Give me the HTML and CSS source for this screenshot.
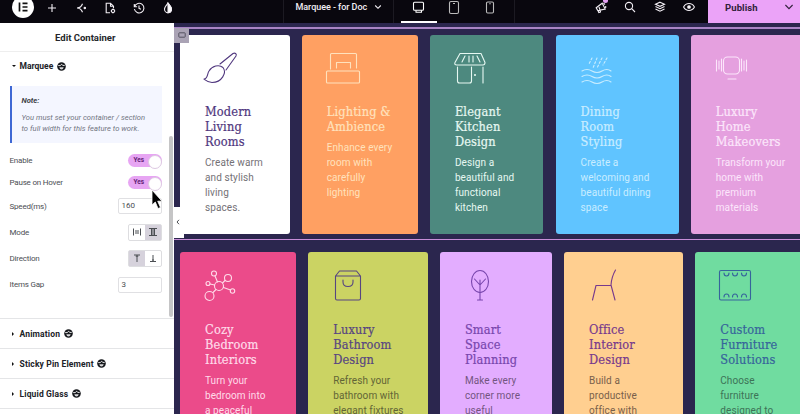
FILE: index.html
```html
<!DOCTYPE html>
<html lang="en">
<head>
<meta charset="utf-8">
<title>Marquee - for Doc</title>
<link rel="stylesheet" href="styles.css">
</head>
<body>
<svg class="defs" width="0" height="0" aria-hidden="true">
  <symbol id="badge" viewBox="0 0 9 9"><circle cx="4.500" cy="4.500" r="4.300" fill="#16181c"/><path d="M1.200 3.600h2L4.700 2.200l1 1.200h2" fill="none" stroke="#fff" stroke-width=".9"/><path d="M2.300 5.200h4.400Q6.200 7.400 4.500 7.400T2.300 5.200z" fill="#d8d8da"/></symbol>
</svg>
<div class="app">
  <header class="topbar">
    <div class="tools">
      <span class="logo"><svg width="22" height="22" viewBox="0 0 22 22"><circle cx="11" cy="11" r="11" fill="#fff"/><path d="M7.500 6.500v9M10.500 7.300h5M10.500 11h5M10.500 14.700h5" stroke="#111" stroke-width="1.700"/></svg></span>
      <svg width="12" height="12" viewBox="0 0 12 12"><path d="M6 2v8M2 6h8"/></svg>
      <svg width="12" height="12" viewBox="0 0 12 12"><path d="M7.500 1.800C6.500 4.500 4.500 6 2 6c2.500 0 4.500 1.500 5.500 4.200"/><circle cx="9.800" cy="6" r=".7" fill="#fff"/></svg>
      <svg width="12" height="12" viewBox="0 0 12 12"><path d="M6 10.800H2.200V1.200h4.300l3 3v2M6.500 1.200v3h3"/><circle cx="9" cy="9" r="1.600"/><path d="M9 6.800v.6M9 10.600v.6M6.800 9h.6M10.600 9h.6"/></svg>
      <svg width="12" height="12" viewBox="0 0 12 12"><path d="M1.600 4.500a4.800 4.800 0 1 1-.2 2.500M1.300 2v2.800h2.800M6 3.600v2.700l1.900.9"/></svg>
      <svg width="12" height="12" viewBox="0 0 12 12"><path d="M6 1.200C4 3.500 2.500 5 2.500 7a3.500 3.800 0 0 0 7 0C9.500 5 8 3.500 6 1.200z"/><path d="M6 1.200V10.800a3.700 3.800 0 0 0 3.500-3.800C9.500 5 8 3.500 6 1.200z" fill="#fff"/></svg>
    </div>
    <div class="doc">Marquee - for Doc <svg width="8" height="6" viewBox="0 0 8 6"><path d="M1.200 1.500 4 4.300l2.800-2.800"/></svg></div>
    <div class="devices">
      <span class="device on"><svg width="14" height="14" viewBox="0 0 14 14"><rect x="1.500" y="2.200" width="10" height="8" rx="1"/><path d="M3.500 12.300h6.500M4 10.200v2M9.500 10.200v2"/></svg></span>
      <span class="device"><svg width="14" height="14" viewBox="0 0 14 14"><rect x="2.500" y="1.500" width="9" height="12" rx="1.500"/><path d="M6 3.500h2"/></svg></span>
      <span class="device"><svg width="14" height="14" viewBox="0 0 14 14"><rect x="3.500" y="2" width="7" height="11" rx="1.200"/><path d="M6.200 3.700h1.600"/></svg></span>
    </div>
    <div class="actions">
      <span class="notice"><svg width="12" height="12" viewBox="0 0 12 12"><path d="m1.200 6.800 6-4.600 3 5.800-7.400 1.600zM4 6l1.600 5M3 9.500l.8 2 2-.5M8.500 2.200 10 3.500M10.700 5v2"/></svg></span>
      <svg width="12" height="12" viewBox="0 0 12 12"><circle cx="5" cy="5" r="3.600"/><path d="m7.700 7.700 3.300 3.300"/></svg>
      <svg width="12" height="12" viewBox="0 0 12 12"><path d="m6 1.200 4.500 2L6 5.300 1.500 3.200zM1.500 5.500 6 7.700l4.500-2.200M1.500 8 6 10.200 10.500 8"/></svg>
      <svg width="12" height="12" viewBox="0 0 12 12"><path d="M.6 6C3 1.400 9 1.400 11.400 6 9 10.600 3 10.600.6 6z"/><circle cx="6" cy="6" r="1.300" fill="#fff"/></svg>
    </div>
    <div class="publish"><b>Publish</b><svg width="10" height="8" viewBox="0 0 10 8"><path d="m1.400 2 3.600 3.600L8.600 2"/></svg></div>
  </header>
  <div class="body">
    <aside class="panel">
      <h1>Edit Container</h1>
      <div class="section-head open"><i class="caret"></i>Marquee <svg width="9" height="9"><use href="#badge"/></svg></div>
      <div class="note"><b>Note:</b><p>You must set your container / section<br>to full width for this feature to work.</p></div>
      <div class="row switch-row"><span>Enable</span><span class="switch">Yes</span></div>
      <div class="row switch-row"><span>Pause on Hover</span><span class="switch">Yes</span></div>
      <div class="row"><span>Speed(ms)</span><span class="field">160</span></div>
      <div class="row"><span>Mode</span><span class="choice"><i><svg width="10" height="10" viewBox="0 0 10 10"><path d="M1.500 1.500v7M8.500 1.500v7M3 4h4M3 6h4"/></svg></i><i class="sel"><svg width="10" height="10" viewBox="0 0 10 10"><path d="M1 1.500h8M1 8.500h8M3.500 2v6M6.500 2v6M5 2v6"/></svg></i></span></div>
      <div class="row"><span>Direction</span><span class="choice"><i class="sel"><svg width="10" height="10" viewBox="0 0 10 10"><path d="M2 2h6M5 2v7M3.700 3.200h2.600"/></svg></i><i><svg width="10" height="10" viewBox="0 0 10 10"><path d="M2 8.500h6M5 2v6M4 7h2"/></svg></i></span></div>
      <div class="row"><span>Items Gap</span><span class="field">3</span></div>
      <div class="sections">
        <div class="section-head"><i class="caret"></i>Animation <svg width="9" height="9"><use href="#badge"/></svg></div>
        <div class="section-head"><i class="caret"></i>Sticky Pin Element <svg width="9" height="9"><use href="#badge"/></svg></div>
        <div class="section-head"><i class="caret"></i>Liquid Glass <svg width="9" height="9"><use href="#badge"/></svg></div>
      </div>
      <span class="scrollbar"></span>
      <span class="collapse"><svg width="4" height="6" viewBox="0 0 4 6"><path d="M3 .8 1 3l2 2.200"/></svg></span>
      <svg class="cursor" width="12" height="21" viewBox="0 0 12 21"><path d="M1 1v15l3.300-3 2.700 6.500 2.500-1-2.800-6.300H11z" fill="#000" stroke="#fff" stroke-width=".8"/></svg>
    </aside>
    <main class="canvas">
      <div class="track first">
        <article class="card white">
          <svg class="icon" viewBox="0 0 34 32"><path d="m15 11 13-10.500c2-1 4 0 3 2.500L21 17M18 14.500c4 5-1 15-11 15-4 0-6-2-8-3.500 4-.5 3-5 5-8 3-5 10-7 14-3.500z"/></svg>
          <h2>Modern<br>Living<br>Rooms</h2><p>Create warm<br>and stylish<br>living<br>spaces.</p></article>
        <article class="card orange">
          <svg class="icon" viewBox="0 0 34 32"><path d="M3.500 16V1.500q0-1 1-1h24q1 0 1 1V15M9.500 15V9.500h14V15"/><rect x="-.5" y="18" width="33" height="12" rx="1"/></svg>
          <h2>Lighting &amp;<br>Ambience</h2><p>Enhance every<br>room with<br>carefully<br>lighting</p></article>
        <article class="card teal">
          <svg class="icon" viewBox="0 0 34 32"><path d="M5 .5h21l4 9q0 2.500-2 2.500H2q-3 0-2-2.500zM10 3 7 9M14 3v6M18 3v6M22 3l3 6M2.500 14v14q0 2 2 2h10q2 0 2-2V14M28 14v16"/><circle cx="20" cy="22" r=".5"/></svg>
          <h2>Elegant<br>Kitchen<br>Design</h2><p>Design a<br>beautiful and<br>functional<br>kitchen</p></article>
        <article class="card blue">
          <svg class="icon" viewBox="0 0 34 32"><path d="M1 18q5-3 10 0t10 0 9 0M1 23.500q5-3 10 0t10 0 9 0M1 29q5-3 10 0t10 0 9 0"/><path stroke-dasharray="2 2" d="m11 5-3 6M16 5l-4 10M21 5l-5 10M26 5l-4 7"/></svg>
          <h2>Dining<br>Room<br>Styling</h2><p>Create a<br>welcoming and<br>beautiful dining<br>space</p></article>
        <article class="card pink">
          <svg class="icon" viewBox="0 0 34 32"><rect x="7.500" y="4" width="16" height="17" rx="4"/><path d="M5.500 6v12M3 8v8M.5 7v11M25.500 6v12M28 8v9M30.500 7v11M12 26h8"/></svg>
          <h2>Luxury<br>Home<br>Makeovers</h2><p>Transform your<br>home with<br>premium<br>materials</p></article>
      </div>
      <div class="track second">
        <article class="card rose">
          <svg class="icon" viewBox="0 0 34 32"><circle cx="14" cy="16" r="4.500"/><circle cx="4.500" cy="26" r="4.500"/><circle cx="9" cy="3.500" r="2.500"/><circle cx="23" cy="8" r="3.500"/><circle cx="3" cy="13.500" r="2"/><circle cx="27.500" cy="21" r="2.200"/><path d="m10 6 2.500 6M20 10.500 17.500 13M5 14l4.500 1M18.500 17.500l7 2.500M11 19.500 8 22.500"/></svg>
          <h2>Cozy<br>Bedroom<br>Interiors</h2><p>Turn your<br>bedroom into<br>a peaceful</p></article>
        <article class="card lime">
          <svg class="icon" viewBox="0 0 34 32"><path d="M2.500 6v22.500q0 1.500 1.500 1.500h22q1.500 0 1.500-1.500V6zM2.500 6l4-5h17l4 5M10 10v2q0 4.500 5 4.500t5-4.500v-2"/></svg>
          <h2>Luxury<br>Bathroom<br>Design</h2><p>Refresh your<br>bathroom with<br>elegant fixtures</p></article>
        <article class="card lilac">
          <svg class="icon" viewBox="0 0 34 32"><ellipse cx="15" cy="11.500" rx="8.500" ry="11"/><path d="M15 10v20M12.500 30h5M9.500 9l5.500 6L20.500 9"/></svg>
          <h2>Smart<br>Space<br>Planning</h2><p>Make every<br>corner more<br>useful</p></article>
        <article class="card peach">
          <svg class="icon" viewBox="0 0 34 32"><path d="M26.500 0q-4 7-4.500 15l4 15M22 15.500H7L3.500 30"/></svg>
          <h2>Office<br>Interior<br>Design</h2><p>Build a<br>productive<br>office with</p></article>
        <article class="card green">
          <svg class="icon" viewBox="0 0 34 32"><rect x="-.5" y=".5" width="31" height="29.500" rx="1.500"/><path d="M4 3q0 3 2.500 3T9 3M12.500 3q0 3 2.500 3t2.500-3M21.500 3q0 3 2.500 3t2.500-3M4 27q0-3 2.500-3T9 27M12.500 27q0-3 2.500-3t2.500 3M21.500 27q0-3 2.500-3t2.500 3"/></svg>
          <h2>Custom<br>Furniture<br>Solutions</h2><p>Choose<br>furniture<br>designed to</p></article>
      </div>
      <span class="handle"><svg width="8" height="6" viewBox="0 0 8 6"><rect x=".8" y=".8" width="6.400" height="4.400" rx=".6"/></svg></span>
    </main>
  </div>
</div>
</body>
</html>
```
FILE: styles.css
```css
* { box-sizing: border-box; }
body { margin: 0; font-family: Roboto, "Liberation Sans", sans-serif; }
h1, h2, p { margin: 0; }
svg { display: block; fill: none; stroke: currentColor; flex: none; overflow: visible; }
.defs { position: absolute; }
.app { width: 800px; height: 414px; overflow: hidden; display: flex; flex-direction: column; }

.topbar { height: 22.5px; flex: none; background: #09070e; color: #f2eef4; display: flex; align-items: stretch; position: relative; z-index: 2; }
.topbar svg { stroke-width: 1.1; }
.tools { width: 284px; display: flex; align-items: center; gap: 17px; padding: 0 0 7px 12px; border-right: 1px solid #1c1a22; }
.logo { width: 22px; height: 22px; margin: -2px 0 0; }
.logo svg { stroke: none; }
.logo + svg { margin-left: -5px; }
.doc { width: 110px; display: flex; align-items: center; gap: 7px; padding: 0 0 8px 11.500px; font-size: 9px; font-weight: 500; letter-spacing: -.05px; white-space: nowrap; border-right: 1px solid #1c1a22; }
.devices { width: 121px; display: flex; padding-left: 7px; border-right: 1px solid #1c1a22; }
.device { width: 35.5px; display: flex; justify-content: center; color: #bbb; }
.device.on { border-bottom: 2px solid #fff; color: #fff; }
.actions { width: 193px; display: flex; align-items: center; justify-content: flex-end; gap: 17.500px; padding: 0 13px 8px 0; }
.notice { position: relative; }
.notice::after { content: ""; position: absolute; width: 5px; height: 5px; border-radius: 50%; background: #e6a3f5; top: -3px; left: 8px; }
.publish { width: 92px; background: #eba3f8; color: #30203b; display: flex; align-items: center; justify-content: space-between; padding: 0 6px 8px 17px; font-size: 9.5px; letter-spacing: .1px; }

.body { flex: 1; display: flex; min-height: 0; }
.panel { width: 173.5px; flex: none; background: #fff; position: relative; z-index: 1; display: flex; flex-direction: column; color: #4b4e53; font-size: 8px; }
h1 { height: 29.500px; line-height: 29px; text-align: center; padding-right: 3px; font-size: 9.500px; font-weight: 700; color: #25272b; border-bottom: 1px solid #eee; }
.section-head { display: flex; align-items: center; gap: 4px; height: 30.200px; padding-left: 11.500px; color: #202227; font-size: 8.500px; letter-spacing: .15px; font-weight: 700; }
.section-head svg { stroke: none; margin-left: -.5px; }
.section-head.open { height: 28px; letter-spacing: 0; }
.caret { width: 4px; border: 2px solid transparent; border-left: 2.500px solid #111; border-right: 0; }
.open .caret { border: 2px solid transparent; border-top: 2.500px solid #111; border-bottom: 0; }
.note { width: 152px; height: 57px; margin: 6px 0 7.500px 9.500px; padding: 10px 0 0 10px; background: #f4f6ff; border-left: 2px solid #3e68d4; font-style: italic; font-size: 7.600px; line-height: 11px; color: #71757f; white-space: nowrap; }
.note b { display: block; margin-bottom: 6px; color: #3c3f45; line-height: 10px; }
.note p { letter-spacing: .03px; }
.row { height: 26.200px; display: flex; justify-content: space-between; align-items: center; padding: 0 12px 0 9.500px; letter-spacing: -.2px; }
.switch-row { height: 22px; margin-top: -1px; margin-bottom: 1px; }
.switch-row + .row:not(.switch-row) { margin-top: -1.500px; }
.switch { width: 34px; height: 13px; border-radius: 7px; background: #e7a5f3; position: relative; padding-left: 6px; line-height: 13px; font-size: 6.500px; font-weight: 700; letter-spacing: 0; color: #632276; }
.switch::after { content: ""; position: absolute; right: 0; top: .5px; width: 12px; height: 12px; border-radius: 50%; background: #fff; border: .5px solid #ddc8e2; }
.field { width: 44px; height: 16px; border: 1px solid #e0e0e3; border-radius: 2px; line-height: 14px; padding-left: 3px; letter-spacing: 0; }
.choice { width: 34px; height: 16.500px; display: flex; border: 1px solid #dddde0; border-radius: 2px; }
.choice i { flex: 1; display: flex; align-items: center; justify-content: center; }
.choice .sel { background: #d6d2dc; }
.sections { margin-top: 20.300px; }
.sections .section-head { border-top: 1px solid #e4e5e7; }
.sections .section-head:last-child { border-bottom: 1px solid #e4e5e7; }
.scrollbar { position: absolute; right: 1px; top: 113px; width: 4px; height: 181px; border-radius: 2px; background: #c5c5c6; }
.collapse { position: absolute; left: 173px; top: 184px; width: 11px; height: 31px; background: #fff; display: flex; align-items: center; justify-content: center; padding-right: 1px; }
.cursor { position: absolute; left: 151px; top: 166px; }

.canvas { flex: 1; min-width: 0; position: relative; background: #2b264e; overflow: hidden; display: flex; flex-direction: column; padding-top: 4.500px; }
.handle { position: absolute; left: .5px; top: 5px; width: 15px; height: 15px; background: #aaa3b5; color: #555260; display: flex; align-items: center; justify-content: center; }
.track { display: flex; gap: 12.200px; padding-left: 6.500px; border-top: 2px solid #a984c5; flex: none; }
.first { height: 211.500px; padding-top: 5.500px; }
.second { margin-top: .8px; padding-top: 12.200px; border-top-width: 1.500px; border-top-color: #c78ed8; }
.card { flex: none; height: 199px; border-radius: 3px; padding: 18px 0 0 25px; white-space: nowrap; }
.icon { width: 34px; height: 32px; stroke-width: 1.100; margin-bottom: 19.500px; stroke-linecap: round; stroke-linejoin: round; }
h2 { font: 400 12.700px/15px "Roboto Slab", "DejaVu Serif Condensed", "DejaVu Serif", serif; letter-spacing: .14px; font-stretch: condensed; -webkit-text-stroke: .2px currentColor; }
.card p { margin-top: 6px; font-size: 10px; line-height: 15.100px; letter-spacing: .1px; }
.white { width: 109.500px; background: #fff; color: #50377e; }
.white p { color: #747176; }
.orange { width: 116px; background: #ffa062; color: #ffe2bd; }
.teal { width: 113.500px; background: #4d897f; color: #e7f8f2; }
.blue { width: 123px; background: #60c4ff; color: #c9edff; }
.pink { width: 124px; background: #e5a0df; color: #fce6fb; }
.rose { width: 116px; background: #eb4b8a; color: #ffdbe9; }
.lime { width: 119.500px; background: #cbd363; color: #574581; }
.lime p { color: #626536; }
.lilac { width: 112px; background: #e3adff; color: #7846ad; }
.lilac p { color: #73557f; }
.peach { width: 119px; background: #ffcf90; color: #77398c; }
.peach p { color: #79604a; }
.green { width: 121px; background: #70dca0; color: #36649b; }
.green p { color: #3d7357; }
```
